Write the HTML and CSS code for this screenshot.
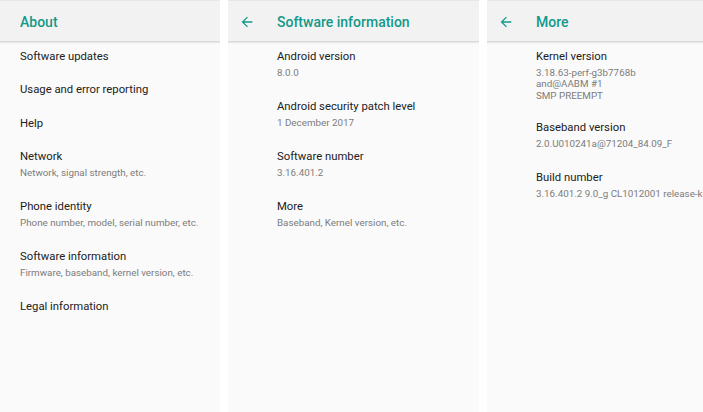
FILE: index.html
```html
<!DOCTYPE html>
<html lang="en">
  <head>
    <meta charset="UTF-8" />
    <meta name="viewport" content="width=device-width, initial-scale=1.0" />
    <title>About phone</title>
    <link rel="stylesheet" href="styles.css">
  </head>
  <body>
    <div class="screens">
      <section class="screen screen-about">
        <header class="app-bar">
          <h1 class="app-title">About</h1>
        </header>
        <ul class="pref-list">
          <li class="pref"><span class="pref-title">Software updates</span></li>
          <li class="pref"><span class="pref-title">Usage and error reporting</span></li>
          <li class="pref"><span class="pref-title">Help</span></li>
          <li class="pref">
            <span class="pref-title">Network</span>
            <span class="pref-summary">Network, signal strength, etc.</span>
          </li>
          <li class="pref">
            <span class="pref-title">Phone identity</span>
            <span class="pref-summary">Phone number, model, serial number, etc.</span>
          </li>
          <li class="pref">
            <span class="pref-title">Software information</span>
            <span class="pref-summary">Firmware, baseband, kernel version, etc.</span>
          </li>
          <li class="pref"><span class="pref-title">Legal information</span></li>
        </ul>
      </section>

      <section class="screen screen-software">
        <header class="app-bar">
          <svg class="back" viewBox="0 0 24 24" aria-hidden="true">
            <path d="M20 11H7.83l5.59-5.59L12 4l-8 8 8 8 1.41-1.41L7.83 13H20v-2z" />
          </svg>
          <h1 class="app-title">Software information</h1>
        </header>
        <ul class="pref-list indented">
          <li class="pref">
            <span class="pref-title">Android version</span>
            <span class="pref-summary">8.0.0</span>
          </li>
          <li class="pref">
            <span class="pref-title">Android security patch level</span>
            <span class="pref-summary">1 December 2017</span>
          </li>
          <li class="pref">
            <span class="pref-title">Software number</span>
            <span class="pref-summary">3.16.401.2</span>
          </li>
          <li class="pref">
            <span class="pref-title">More</span>
            <span class="pref-summary">Baseband, Kernel version, etc.</span>
          </li>
        </ul>
      </section>

      <section class="screen screen-more">
        <header class="app-bar">
          <svg class="back" viewBox="0 0 24 24" aria-hidden="true">
            <path d="M20 11H7.83l5.59-5.59L12 4l-8 8 8 8 1.41-1.41L7.83 13H20v-2z" />
          </svg>
          <h1 class="app-title">More</h1>
        </header>
        <ul class="pref-list indented">
          <li class="pref pref-multi">
            <span class="pref-title">Kernel version</span>
            <span class="pref-summary">3.18.63-perf-g3b7768b<br />and@AABM #1<br />SMP PREEMPT</span>
          </li>
          <li class="pref">
            <span class="pref-title">Baseband version</span>
            <span class="pref-summary">2.0.U010241a@71204_84.09_F</span>
          </li>
          <li class="pref">
            <span class="pref-title">Build number</span>
            <span class="pref-summary">3.16.401.2 9.0_g CL1012001 release-keys</span>
          </li>
        </ul>
      </section>
    </div>
  </body>
</html>
```

FILE: styles.css
```css
body {
  margin: 0;
  padding: 0;
  background-color: #fff;
  font-family: Roboto, "Noto Sans", sans-serif;
  overflow: hidden;
}

.screens {
  display: flex;
  gap: 8px;
  height: 412px;
}

.screen {
  flex: none;
  height: 100%;
  background-color: #fafafa;
  overflow: hidden;
}

.screen-about {
  width: 220px;
}

.screen-software {
  width: 251px;
}

.screen-more {
  width: 250px;
}

.app-bar {
  position: relative;
  display: flex;
  align-items: center;
  box-sizing: border-box;
  height: 41px;
  padding-top: 2px;
  background-color: #f2f2f2;
  border-top: 1px solid #e6e6e6;
  box-shadow: 0 1px 0 #d9d9d9, 0 2px 1px #e8e8e8;
}

.back {
  flex: none;
  width: 16px;
  height: 16px;
  margin-left: 11px;
  margin-right: 17px;
  fill: #13998a;
}

.app-title {
  margin: 0 0 0 20px;
  font-size: 14px;
  font-weight: 500;
  color: #13998a;
  white-space: nowrap;
}

.back + .app-title {
  margin-left: 5px;
}

.pref-list {
  list-style: none;
  margin: 0;
  padding: 1.5px 0 0 20px;
}

.pref-list.indented {
  padding-left: 49px;
}

.pref {
  display: flex;
  flex-direction: column;
  padding: 7px 0 12.5px;
  white-space: nowrap;
}

.pref-title {
  font-size: 11.3px;
  line-height: 14px;
  color: #212121;
}

.pref-summary {
  margin-top: 3px;
  margin-bottom: 1.5px;
  font-size: 9.8px;
  line-height: 12px;
  color: #7c7c7c;
}

.pref-multi {
  padding-bottom: 11px;
}

.pref-multi .pref-summary {
  line-height: 11.5px;
}
```
